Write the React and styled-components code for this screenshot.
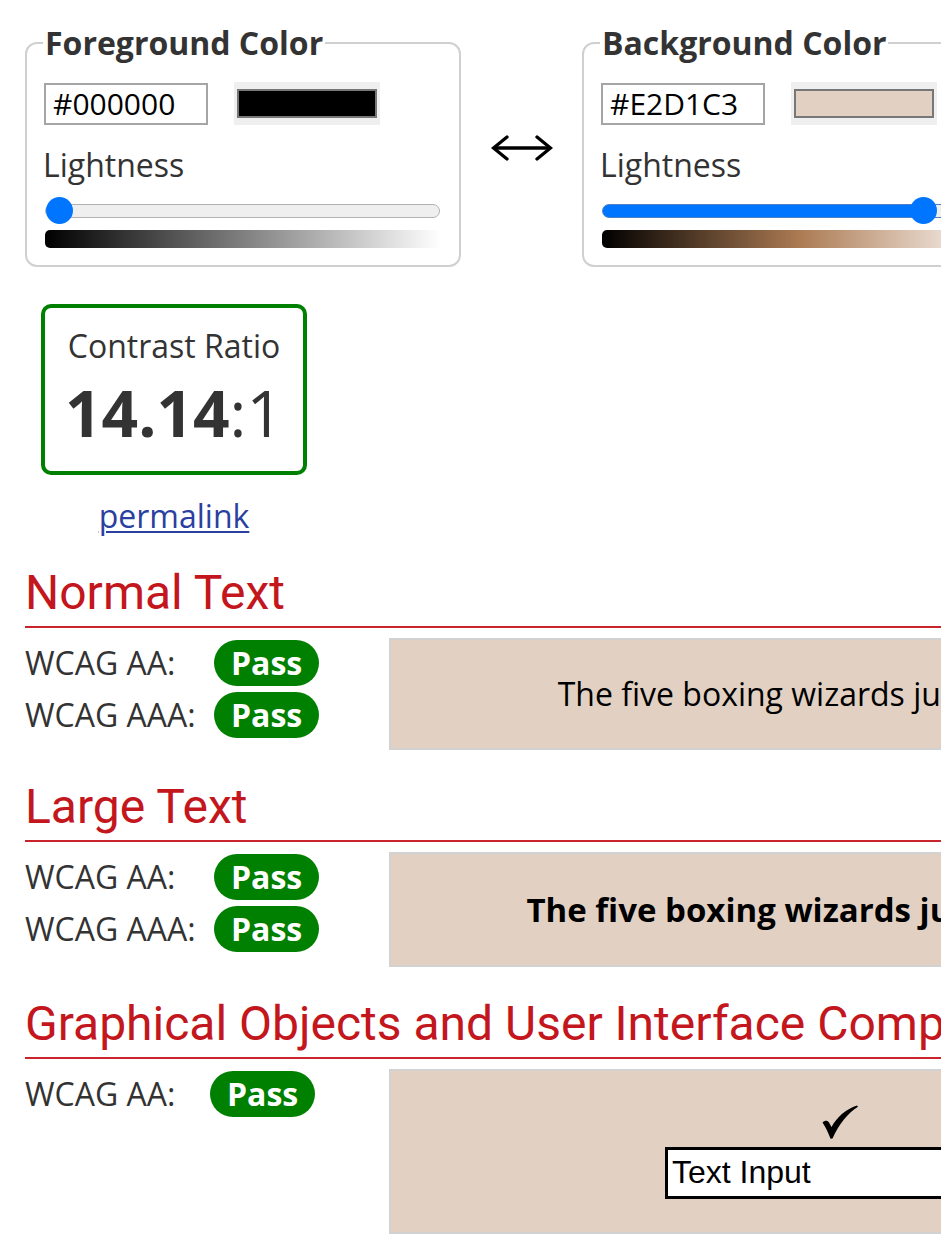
import React from 'react';
import styled, { createGlobalStyle } from 'styled-components';

const GlobalStyle = createGlobalStyle`
  html, body { margin: 0; padding: 0; background: #fff; overflow: hidden; }
  body { font-family: "Open Sans", "Liberation Sans", sans-serif; color: #333; }
  #root { width: 941px; height: 1254px; overflow: hidden; }
`;

const Page = styled.div`
  width: 1320px;
  box-sizing: border-box;
  padding: 19px 0 0 25px;
`;

const ColorRow = styled.div`
  display: flex;
  align-items: flex-start;
`;

const Fieldset = styled.fieldset`
  width: 436px;
  box-sizing: border-box;
  margin: 0;
  border: 2px solid #d0d0d0;
  border-radius: 12px;
  padding: 15px 16px 17px;
  min-inline-size: 0;
`;

const Legend = styled.legend`
  font-weight: 700;
  font-size: 32px;
  line-height: 48px;
  padding: 0 2px;
  color: #333;
`;

const InputRow = styled.div`
  display: flex;
  align-items: center;
  gap: 26px;
  padding-left: 1px;
`;

const HexInput = styled.input`
  width: 164px;
  height: 42px;
  box-sizing: border-box;
  border: 2px solid #a5a5a5;
  border-radius: 0;
  padding: 0 7px;
  margin: 0;
  font-family: "Open Sans", sans-serif;
  font-size: 30px;
  color: #000;
  background: #fff;
  outline: none;
`;

const Swatch = styled.div`
  width: 146px;
  height: 43px;
  box-sizing: border-box;
  padding: 7px 3px;
  background: #efefef;
`;

const SwatchInner = styled.div`
  height: 100%;
  box-sizing: border-box;
  border: 2px solid #777;
  background: ${(p) => p.$color};
`;

const FieldLabel = styled.div`
  margin-top: 16px;
  font-size: 32px;
  line-height: 48px;
  color: #333;
`;

const Range = styled.input.attrs({ type: 'range', min: 0, max: 100 })`
  -webkit-appearance: none;
  appearance: none;
  display: block;
  width: 395px;
  height: 27px;
  margin: 8px 2px 0;
  padding: 0;
  background: transparent;
  &::-webkit-slider-runnable-track {
    height: 14px;
    box-sizing: border-box;
    border-radius: 7px;
    border: 1.5px solid ${(p) => (p.$fill > 0 ? '#4d7fc4' : '#b2b2b2')};
    background: linear-gradient(
      to right,
      #0075ff 0,
      #0075ff ${(p) => p.$fill}px,
      #efefef ${(p) => p.$fill}px
    );
  }
  &::-webkit-slider-thumb {
    -webkit-appearance: none;
    appearance: none;
    width: 27px;
    height: 27px;
    border-radius: 50%;
    border: none;
    background: #0075ff;
    margin-top: -8px;
  }
`;

const GradientBar = styled.div`
  height: 18px;
  margin: 6px 2px 0;
  border-radius: 5px;
  background: ${(p) => p.$bg};
`;

const ArrowCell = styled.div`
  width: 121px;
  padding-top: 116px;
  display: flex;
  justify-content: center;
`;

const ContrastWrap = styled.div`
  width: 266px;
  margin: 37px 0 0 16px;
`;

const ContrastBox = styled.div`
  box-sizing: border-box;
  border: 4px solid #008000;
  border-radius: 10px;
  padding: 14px 0 20px;
  text-align: center;
  color: #333;
`;

const RatioLabel = styled.div`
  font-size: 32px;
  line-height: 48px;
`;

const RatioValue = styled.div`
  margin-top: 4px;
  font-size: 64px;
  line-height: 77px;
  strong { font-weight: 700; }
`;

const Permalink = styled.a`
  display: block;
  margin-top: 17px;
  text-align: center;
  font-size: 32px;
  line-height: 48px;
  color: #2a3f9f;
  text-decoration: underline;
  text-underline-offset: 3px;
  text-decoration-thickness: 2px;
`;

const Section = styled.section`
  margin-top: ${(p) => p.$top}px;
`;

const Heading = styled.h2`
  margin: 0;
  font-family: Roboto, "Liberation Sans", sans-serif;
  font-weight: 400;
  font-size: 48px;
  line-height: 58px;
  padding-bottom: 4px;
  color: #c3161d;
  border-bottom: 2px solid #c9232b;
  white-space: nowrap;
`;

const Results = styled.div`
  display: flex;
  align-items: flex-start;
  margin-top: 10px;
`;

const Rows = styled.div`
  width: 364px;
  padding-top: 2px;
  display: flex;
  flex-direction: column;
  gap: 6px;
`;

const Row = styled.div`
  display: flex;
  align-items: center;
  height: 46px;
`;

const RowLabel = styled.div`
  width: ${(p) => p.$w}px;
  font-size: 32px;
  line-height: 46px;
  color: #333;
  white-space: nowrap;
`;

const Badge = styled.span`
  display: inline-block;
  background: #008000;
  color: #fff;
  font-weight: 700;
  font-size: 32px;
  line-height: 46px;
  padding: 0 17px;
  border-radius: 23px;
`;

const Sample = styled.div`
  width: 890px;
  flex-shrink: 0;
  box-sizing: border-box;
  border: 2px solid #d2d2d2;
  background: #e2d1c3;
  color: #000;
  text-align: center;
  white-space: nowrap;
  padding: 30px 0;
  font-size: ${(p) => (p.$large ? 33 : 32)}px;
  font-weight: ${(p) => (p.$large ? 700 : 400)};
  line-height: ${(p) => (p.$large ? 51 : 48)}px;
`;

const GraphicSample = styled.div`
  width: 890px;
  height: 165px;
  flex-shrink: 0;
  box-sizing: border-box;
  border: 2px solid #d2d2d2;
  background: #e2d1c3;
  display: flex;
  flex-direction: column;
  align-items: center;
  justify-content: center;
  gap: 8px;
`;

const CheckIcon = styled.svg`
  display: block;
  margin-left: 12px;
`;

const TextInput = styled.input`
  width: 338px;
  height: 52px;
  box-sizing: border-box;
  border: 3px solid #000;
  border-radius: 0;
  padding: 0 4px;
  margin: 0;
  background: #fff;
  color: #000;
  font-family: "Liberation Sans", Arial, sans-serif;
  font-size: 32px;
  outline: none;
`;

const TRACK = 395;
const THUMB = 27;
const fillFor = (v) => (v <= 0 ? 0 : THUMB / 2 + (v / 100) * (TRACK - THUMB));

function ColorPicker({ title, hex, value, gradient }) {
  return (
    <Fieldset>
      <Legend>{title}</Legend>
      <InputRow>
        <HexInput defaultValue={hex} />
        <Swatch>
          <SwatchInner $color={hex} />
        </Swatch>
      </InputRow>
      <FieldLabel>Lightness</FieldLabel>
      <Range defaultValue={value} $fill={fillFor(value)} />
      <GradientBar $bg={gradient} />
    </Fieldset>
  );
}

function SwapArrow() {
  return (
    <svg width="62" height="26" viewBox="0 0 62 26" aria-hidden="true">
      <line x1="3" y1="13" x2="59" y2="13" stroke="#000" strokeWidth="3.3" />
      <polyline points="16,2 2.5,13 16,24" fill="none" stroke="#000" strokeWidth="3.3" strokeLinecap="round" />
      <polyline points="46,2 59.5,13 46,24" fill="none" stroke="#000" strokeWidth="3.3" strokeLinecap="round" />
    </svg>
  );
}

function ResultRows({ items, labelWidth }) {
  return (
    <Rows>
      {items.map((label) => (
        <Row key={label}>
          <RowLabel $w={labelWidth}>{label}</RowLabel>
          <Badge>Pass</Badge>
        </Row>
      ))}
    </Rows>
  );
}

export default function App() {
  return (
    <>
      <GlobalStyle />
      <Page>
        <ColorRow>
          <ColorPicker
            title="Foreground Color"
            hex="#000000"
            value={0}
            gradient="linear-gradient(to right, #000 0%, #fff 100%)"
          />
          <ArrowCell>
            <SwapArrow />
          </ArrowCell>
          <ColorPicker
            title="Background Color"
            hex="#E2D1C3"
            value={84}
            gradient="linear-gradient(to right, hsl(27,35%,0%) 0%, hsl(27,35%,50%) 50%, hsl(27,35%,100%) 100%)"
          />
        </ColorRow>

        <ContrastWrap>
          <ContrastBox>
            <RatioLabel>Contrast Ratio</RatioLabel>
            <RatioValue>
              <strong>14.14</strong>:1
            </RatioValue>
          </ContrastBox>
          <Permalink href="#">permalink</Permalink>
        </ContrastWrap>

        <Section $top={24}>
          <Heading>Normal Text</Heading>
          <Results>
            <ResultRows items={['WCAG AA:', 'WCAG AAA:']} labelWidth={189} />
            <Sample>The five boxing wizards jump quickly.</Sample>
          </Results>
        </Section>

        <Section $top={28}>
          <Heading>Large Text</Heading>
          <Results>
            <ResultRows items={['WCAG AA:', 'WCAG AAA:']} labelWidth={189} />
            <Sample $large>The five boxing wizards jump quickly.</Sample>
          </Results>
        </Section>

        <Section $top={28}>
          <Heading>Graphical Objects and User Interface Components</Heading>
          <Results>
            <ResultRows items={['WCAG AA:']} labelWidth={185} />
            <GraphicSample>
              <CheckIcon width="36" height="34" viewBox="0 0 36 34" aria-hidden="true">
                <path
                  d="M0.5 17.5 C2.5 15.5 5.5 15 7 17.5 L9.5 22 C15 12 24 4 35 0.5 L36 1.8 C26 8 17 19 10.5 33.5 L8.5 33.8 C6 27 3.5 22 0.5 17.5 Z"
                  fill="#000"
                />
              </CheckIcon>
              <TextInput defaultValue="Text Input" />
            </GraphicSample>
          </Results>
        </Section>
      </Page>
    </>
  );
}
